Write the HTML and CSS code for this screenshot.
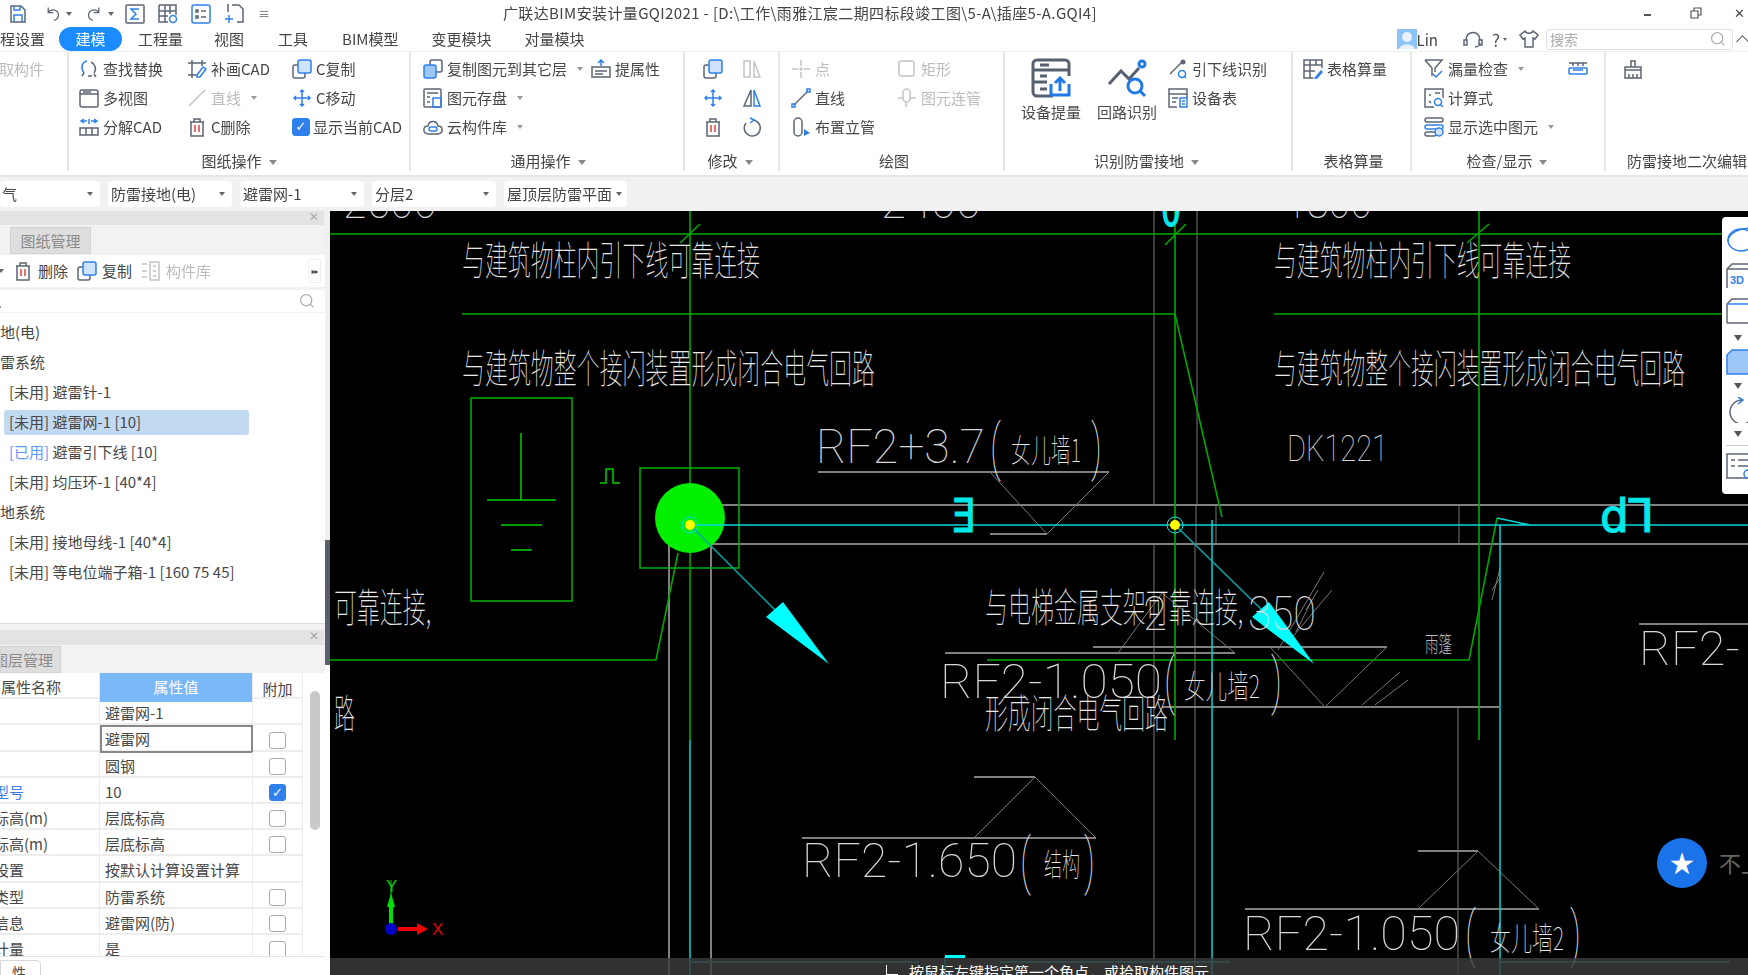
FILE: index.html
```html
<!DOCTYPE html>
<html lang="zh-CN">
<head>
<meta charset="utf-8">
<title>广联达BIM安装计量GQI2021</title>
<link rel="stylesheet" href="styles.css">
</head>
<body>
<svg class="defs" width="0" height="0" aria-hidden="true">
  <symbol id="i-save" viewBox="0 0 20 20"><path class="sg" d="M3 2h10l4 4v12H3z"/><path class="sb" d="M6 18v-7h8v7M6 2v4h6V2"/></symbol>
  <symbol id="i-undo" viewBox="0 0 20 20"><path class="sg" d="M5 3v6h6M5 9c3-5 12-4 12 3 0 3-2 5-5 6"/></symbol>
  <symbol id="i-redo" viewBox="0 0 20 20"><path class="sg" d="M15 3v6H9M15 9C12 4 3 5 3 12c0 3 2 5 5 6"/></symbol>
  <symbol id="i-sigma" viewBox="0 0 20 20"><rect class="sg" x="1" y="1" width="18" height="18" rx="1"/><path class="sb" d="M14 5H6l5 5-5 5h8"/></symbol>
  <symbol id="i-gridview" viewBox="0 0 20 20"><path class="sg" d="M1 1h17v10M1 1v17h9M1 7h17M1 12h9M7 1v17M12 1v9"/><circle class="sb" cx="15" cy="15" r="3.5"/></symbol>
  <symbol id="i-form" viewBox="0 0 20 20"><rect class="sb" x="1" y="1" width="18" height="18" rx="2"/><path class="sg" d="M5 6h2v2H5zM5 12h2v2H5zM10 7h5M10 13h5"/></symbol>
  <symbol id="i-addsel" viewBox="0 0 20 20"><path class="sg" d="M8 1h7l4 4v13h-6M4 8V1h1M19 10v2"/><path class="sb" d="M5 11v8M1 15h8"/></symbol>
  <symbol id="i-find" viewBox="0 0 20 20"><path class="sb" d="M8 2C3 3 1 9 5 14"/><path class="sg" d="M12 3c4 2 6 7 3 11M9 17h4M15 15l2 3M5 14l-2 3"/></symbol>
  <symbol id="i-cadadd" viewBox="0 0 20 20"><path class="sg" d="M1 4h18M1 16h9M5 1v18M15 1v6"/><path class="sb" d="M10 16l6-8 3 2-6 8h-3z"/></symbol>
  <symbol id="i-copy" viewBox="0 0 20 20"><rect class="sg" x="1" y="6" width="12" height="13" rx="2"/><rect class="fb" x="6" y="1" width="13" height="13" rx="2"/></symbol>
  <symbol id="i-win" viewBox="0 0 20 20"><rect class="sg" x="1" y="2" width="18" height="17" rx="2"/><path class="sg" d="M1 6h18M4 4h8"/></symbol>
  <symbol id="i-line" viewBox="0 0 20 20"><path class="sd" d="M2 18L18 2"/></symbol>
  <symbol id="i-move" viewBox="0 0 20 20"><path class="sb" d="M10 3v14M3 10h14M8 4l2-2 2 2M8 16l2 2 2-2M4 8l-2 2 2 2M16 8l2 2-2 2"/></symbol>
  <symbol id="i-explode" viewBox="0 0 20 20"><path class="sb" d="M2 4h6M5 2L2 4l3 2M18 4h-6M15 2l3 2-3 2M10 2v5"/><path class="sg" d="M1 11h18v7H1zM7 11v7M13 11v7"/></symbol>
  <symbol id="i-trash" viewBox="0 0 20 20"><path class="sg" d="M3 5h14M7 5V2h6v3M4 5v14h12V5"/><path class="sr" d="M8 8v7M12 8v7"/></symbol>
  <symbol id="i-copyl" viewBox="0 0 20 20"><rect class="sg" x="7" y="1" width="12" height="12" rx="2"/><rect class="fbl" x="1" y="6" width="12" height="13" rx="2"/></symbol>
  <symbol id="i-store" viewBox="0 0 20 20"><rect class="sg" x="1" y="1" width="17" height="18" rx="1"/><path class="sg" d="M4 5h11M4 9h3M4 14h3"/><rect class="sb" x="10" y="10" width="8" height="9"/></symbol>
  <symbol id="i-cloud" viewBox="0 0 20 20"><path class="sg" d="M5 17C-1 16 0 9 5 9c1-6 9-6 10 0 5 0 6 7 0 8z"/><rect class="sb" x="6" y="10" width="8" height="4" rx="2"/></symbol>
  <symbol id="i-prop" viewBox="0 0 20 20"><path class="sg" d="M1 8h18v10H1zM4 12h12M4 15h8"/><path class="sb" d="M10 7V1M7 4l3-3 3 3"/></symbol>
  <symbol id="i-mirrorg" viewBox="0 0 20 20"><path class="sd" d="M2 2h6v16H2zM12 2l6 16h-6z"/></symbol>
  <symbol id="i-mirror" viewBox="0 0 20 20"><path class="sg" d="M9 2L2 18h7z"/><path class="sb" d="M12 2l6 16h-6z"/></symbol>
  <symbol id="i-rot" viewBox="0 0 20 20"><path class="sg" d="M11 3a8 8 0 1 1-7 3"/><path class="sb" d="M8 1l4 2-4 3"/></symbol>
  <symbol id="i-point" viewBox="0 0 20 20"><path class="sd" d="M10 1v6M10 13v6M1 10h6M13 10h6"/><circle class="sd" cx="10" cy="10" r="1"/></symbol>
  <symbol id="i-rect" viewBox="0 0 20 20"><rect class="sd" x="2" y="2" width="15" height="15" rx="2"/></symbol>
  <symbol id="i-lineb" viewBox="0 0 20 20"><path class="sg" d="M3 17L17 3"/><rect class="sb" x="1" y="16" width="3" height="3"/><rect class="sb" x="16" y="1" width="3" height="3"/></symbol>
  <symbol id="i-pipeg" viewBox="0 0 20 20"><rect class="sd" x="6" y="1" width="7" height="13" rx="3.5"/><path class="sd" d="M1 10h5M13 10h6M9 14v5"/></symbol>
  <symbol id="i-pipe" viewBox="0 0 20 20"><rect class="sg" x="3" y="1" width="8" height="18" rx="4"/><path class="tb" d="M13 12l6 4-6 3z"/></symbol>
  <symbol id="i-extract" viewBox="0 0 40 40"><path class="sg2" d="M22 38H6a4 4 0 0 1-4-4V6a4 4 0 0 1 4-4h28a4 4 0 0 1 4 4v12M2 12h36M2 24h14M9 7h9M9 18h7M9 31h7"/><path class="sb2" d="M20 26v11h18V26M29 33V20M24 25l5-5 5 5"/></symbol>
  <symbol id="i-loop" viewBox="0 0 40 40"><path class="sg2" d="M2 26l12-13 8 8 10-11"/><circle class="sb2" cx="35" cy="6" r="3"/><circle class="sb2" cx="28" cy="28" r="7"/><path class="sb2" d="M33 33l5 5"/></symbol>
  <symbol id="i-down" viewBox="0 0 20 20"><path class="sg" d="M2 15L14 3"/><circle class="fg" cx="15" cy="3" r="2.5"/><circle class="sb" cx="14" cy="15" r="3.5"/><path class="sb" d="M16 17l2 2"/></symbol>
  <symbol id="i-devtab" viewBox="0 0 20 20"><path class="sg" d="M9 19H1V1h18v9M1 6h18M4 10h6M4 14h4"/><rect class="sb" x="12" y="10" width="7" height="9"/><path class="sb" d="M14 13h3M14 16h3"/></symbol>
  <symbol id="i-tablec" viewBox="0 0 20 20"><path class="sg" d="M10 19H1V1h18v8M1 6h18M1 12h11M7 1v18M13 1v5"/><path class="sb" d="M13 18l5-6 1 1-5 6h-2z"/></symbol>
  <symbol id="i-filter" viewBox="0 0 20 20"><path class="sg" d="M1 1h17l-7 8v4M1 1l7 8v8"/><path class="sb" d="M9 15l3 3 6-6"/></symbol>
  <symbol id="i-ruler" viewBox="0 0 20 20"><path class="sb" d="M1 9h18M1 15h18M1 9v6M19 9v6M5 11h10"/><path class="sg" d="M1 4h18M5 4v3M10 4v3M15 4v3"/></symbol>
  <symbol id="i-calc" viewBox="0 0 20 20"><path class="sg" d="M10 19H1V1h18v9M5 7h2M5 13l2 2M11 5h5"/><circle class="sb" cx="14" cy="14" r="3.5"/><path class="sb" d="M16 16l3 3"/></symbol>
  <symbol id="i-showsel" viewBox="0 0 20 20"><rect class="sg" x="1" y="1" width="18" height="4" rx="2"/><rect class="sb" x="1" y="8" width="18" height="4" rx="2"/><rect class="sg" x="1" y="15" width="11" height="4" rx="2"/><circle class="fb" cx="15" cy="15" r="4"/></symbol>
  <symbol id="i-brush" viewBox="0 0 20 20"><path class="sg" d="M8 8V2h4v6M2 8h16v3H2zM2 11v8h16v-8M6 15v4M10 15v4M14 15v4"/></symbol>
  <symbol id="i-search" viewBox="0 0 20 20"><circle class="sl" cx="9" cy="9" r="7"/><path class="sl" d="M14 14l4 4"/></symbol>
  <symbol id="i-head" viewBox="0 0 20 20"><path class="sg" d="M3 11C3 1 17 1 17 11M12 18c3 0 5-2 5-4M1 11h3v5H1zM16 11h3v5h-3z"/></symbol>
  <symbol id="i-shirt" viewBox="0 0 20 20"><path class="sg" d="M6 2L1 6l3 4 2-1v9h8V9l2 1 3-4-5-4c-1 3-7 3-8 0z"/></symbol>
  <symbol id="i-lib" viewBox="0 0 20 20"><path class="sd" d="M1 3h5M1 10h5M1 16h5M9 1h9v18H9zM12 5h3M12 10h3M12 15h3"/></symbol>
  <symbol id="i-restore" viewBox="0 0 12 12"><path class="sw" d="M1 4h7v7H1zM4 4V1h7v7H8"/></symbol>
</svg>

<div class="app">
  <header class="title">
    <div class="qat">
      <svg class="ic"><use href="#i-save"/></svg>
      <svg class="ic ic-u"><use href="#i-undo"/></svg><span class="dd"></span>
      <svg class="ic ic-u"><use href="#i-redo"/></svg><span class="dd"></span>
      <svg class="ic"><use href="#i-sigma"/></svg>
      <svg class="ic"><use href="#i-gridview"/></svg>
      <svg class="ic"><use href="#i-form"/></svg>
      <svg class="ic"><use href="#i-addsel"/></svg>
      <span class="more">≡</span>
    </div>
    <div class="title-text">广联达BIM安装计量GQI2021 - [D:\工作\雨雅江宸二期四标段竣工图\5-A\插座5-A.GQI4]</div>
    <div class="winctl"><span class="w-min"></span><svg class="w-max"><use href="#i-restore"/></svg><span class="w-x">✕</span></div>
  </header>

  <nav class="tabs">
    <span class="tab t0">程设置</span>
    <span class="tab on">建模</span>
    <span class="tab t2">工程量</span>
    <span class="tab t3">视图</span>
    <span class="tab t4">工具</span>
    <span class="tab t5">BIM模型</span>
    <span class="tab t6">变更模块</span>
    <span class="tab t7">对量模块</span>
    <div class="user">
      <svg class="avatar" viewBox="0 0 20 20"><rect class="av-bg" width="20" height="20"/><circle class="av-f" cx="10" cy="8" r="5"/><path class="av-f" d="M2 20c1-6 15-6 16 0z"/></svg>
      <span class="lin">Lin</span>
      <svg class="ic ic-h"><use href="#i-head"/></svg>
      <span class="help">?</span><span class="dd dd-s"></span>
      <svg class="ic ic-s"><use href="#i-shirt"/></svg>
      <div class="searchbox"><span>搜索</span><svg class="ic-sm"><use href="#i-search"/></svg></div>
      <span class="collapse"></span>
    </div>
  </nav>

  <section class="ribbon">
    <div class="grp g1">
      <div class="grp-body"><div class="col"><div class="it off cut">取构件</div></div></div>
    </div>
    <div class="grp g2">
      <div class="grp-body">
        <div class="col c2a">
          <div class="it"><svg class="ic"><use href="#i-find"/></svg>查找替换</div>
          <div class="it"><svg class="ic"><use href="#i-win"/></svg>多视图</div>
          <div class="it"><svg class="ic"><use href="#i-explode"/></svg>分解CAD</div>
        </div>
        <div class="col c2b">
          <div class="it"><svg class="ic"><use href="#i-cadadd"/></svg>补画CAD</div>
          <div class="it off"><svg class="ic"><use href="#i-line"/></svg>直线<span class="dd dd-g"></span></div>
          <div class="it"><svg class="ic"><use href="#i-trash"/></svg>C删除</div>
        </div>
        <div class="col">
          <div class="it"><svg class="ic"><use href="#i-copy"/></svg>C复制</div>
          <div class="it"><svg class="ic"><use href="#i-move"/></svg>C移动</div>
          <div class="it it-chk"><span class="cb on big">✓</span>显示当前CAD</div>
        </div>
      </div>
      <div class="grp-label">图纸操作<span class="dd dd-l"></span></div>
    </div>
    <div class="grp g3">
      <div class="grp-body">
        <div class="col c3a">
          <div class="it"><svg class="ic"><use href="#i-copyl"/></svg>复制图元到其它层<span class="dd dd-g"></span></div>
          <div class="it"><svg class="ic"><use href="#i-store"/></svg>图元存盘<span class="dd dd-g"></span></div>
          <div class="it"><svg class="ic"><use href="#i-cloud"/></svg>云构件库<span class="dd dd-g"></span></div>
        </div>
        <div class="col"><div class="it"><svg class="ic"><use href="#i-prop"/></svg>提属性</div></div>
      </div>
      <div class="grp-label">通用操作<span class="dd dd-l"></span></div>
    </div>
    <div class="grp g4">
      <div class="grp-body">
        <div class="col c4a">
          <div class="it"><svg class="ic"><use href="#i-copy"/></svg></div>
          <div class="it"><svg class="ic"><use href="#i-move"/></svg></div>
          <div class="it"><svg class="ic"><use href="#i-trash"/></svg></div>
        </div>
        <div class="col">
          <div class="it"><svg class="ic"><use href="#i-mirrorg"/></svg></div>
          <div class="it"><svg class="ic"><use href="#i-mirror"/></svg></div>
          <div class="it"><svg class="ic"><use href="#i-rot"/></svg></div>
        </div>
      </div>
      <div class="grp-label">修改<span class="dd dd-l"></span></div>
    </div>
    <div class="grp g5">
      <div class="grp-body">
        <div class="col c5a">
          <div class="it off"><svg class="ic"><use href="#i-point"/></svg>点</div>
          <div class="it"><svg class="ic"><use href="#i-lineb"/></svg>直线</div>
          <div class="it"><svg class="ic"><use href="#i-pipe"/></svg>布置立管</div>
        </div>
        <div class="col">
          <div class="it off"><svg class="ic"><use href="#i-rect"/></svg>矩形</div>
          <div class="it off"><svg class="ic"><use href="#i-pipeg"/></svg>图元连管</div>
        </div>
      </div>
      <div class="grp-label">绘图</div>
    </div>
    <div class="grp g6">
      <div class="grp-body">
        <div class="large"><svg class="ic-lg"><use href="#i-extract"/></svg>设备提量</div>
        <div class="large"><svg class="ic-lg"><use href="#i-loop"/></svg>回路识别</div>
        <div class="col c6c">
          <div class="it"><svg class="ic"><use href="#i-down"/></svg>引下线识别</div>
          <div class="it"><svg class="ic"><use href="#i-devtab"/></svg>设备表</div>
        </div>
      </div>
      <div class="grp-label">识别防雷接地<span class="dd dd-l"></span></div>
    </div>
    <div class="grp g7">
      <div class="grp-body"><div class="col"><div class="it"><svg class="ic"><use href="#i-tablec"/></svg>表格算量</div></div></div>
      <div class="grp-label">表格算量</div>
    </div>
    <div class="grp g8">
      <div class="grp-body">
        <div class="col c8a">
          <div class="it"><svg class="ic"><use href="#i-filter"/></svg>漏量检查<span class="dd dd-g"></span></div>
          <div class="it"><svg class="ic"><use href="#i-calc"/></svg>计算式</div>
          <div class="it"><svg class="ic"><use href="#i-showsel"/></svg>显示选中图元<span class="dd dd-g"></span></div>
        </div>
        <div class="col"><div class="it"><svg class="ic"><use href="#i-ruler"/></svg></div></div>
      </div>
      <div class="grp-label">检查/显示<span class="dd dd-l"></span></div>
    </div>
    <div class="grp g9">
      <div class="grp-body"><div class="col"><div class="it"><svg class="ic"><use href="#i-brush"/></svg></div></div></div>
      <div class="grp-label lab-nw">防雷接地二次编辑</div>
    </div>
  </section>

  <section class="bar">
    <div class="sel s1"><span class="cut">气</span><span class="dd"></span></div>
    <div class="sel s2"><span>防雷接地(电)</span><span class="dd"></span></div>
    <div class="sel s2"><span>避雷网-1</span><span class="dd"></span></div>
    <div class="sel s2"><span>分层2</span><span class="dd"></span></div>
    <div class="sel s3"><span>屋顶层防雷平面</span><span class="dd"></span></div>
  </section>

  <main class="main">
    <aside class="side">
      <div class="strip"><span class="x">✕</span></div>
      <div class="ptabs p1"><span class="ptab">图纸管理</span></div>
      <div class="ptools">
        <span class="dd dd-first"></span>
        <span class="pt"><svg class="ic"><use href="#i-trash"/></svg>删除</span>
        <span class="pt"><svg class="ic"><use href="#i-copy"/></svg>复制</span>
        <span class="pt off"><svg class="ic"><use href="#i-lib"/></svg>构件库</span>
        <span class="pmore">▸▸</span>
      </div>
      <div class="psearch"><span class="dot">.</span><svg class="ic-sm"><use href="#i-search"/></svg></div>
      <ul class="tree">
        <li>地(电)</li>
        <li>雷系统</li>
        <li class="lv2">[未用] 避雷针-1</li>
        <li class="lv2 sel-row"><span>[未用] 避雷网-1 [10]</span></li>
        <li class="lv2"><span class="used">[已用]</span> 避雷引下线 [10]</li>
        <li class="lv2">[未用] 均压环-1 [40*4]</li>
        <li>地系统</li>
        <li class="lv2">[未用] 接地母线-1 [40*4]</li>
        <li class="lv2">[未用] 等电位端子箱-1 [160 75 45]</li>
      </ul>
      <div class="pgap"></div>
      <div class="strip s2x"><span class="x">✕</span></div>
      <div class="ptabs p2"><span class="ptab pt2">图层管理</span></div>
      <div class="ptable">
        <div class="grid">
          <div class="r hdr"><div class="c1">属性名称</div><div class="c2">属性值</div><div class="c3">附加</div></div>
          <div class="r"><div class="c1"></div><div class="c2">避雷网-1</div><div class="c3"></div></div>
          <div class="r"><div class="c1"></div><div class="c2 edit">避雷网</div><div class="c3"><span class="cb"></span></div></div>
          <div class="r"><div class="c1"></div><div class="c2">圆钢</div><div class="c3"><span class="cb"></span></div></div>
          <div class="r"><div class="c1 link">型号</div><div class="c2">10</div><div class="c3"><span class="cb on">✓</span></div></div>
          <div class="r"><div class="c1">标高(m)</div><div class="c2">层底标高</div><div class="c3"><span class="cb"></span></div></div>
          <div class="r"><div class="c1">标高(m)</div><div class="c2">层底标高</div><div class="c3"><span class="cb"></span></div></div>
          <div class="r"><div class="c1">设置</div><div class="c2">按默认计算设置计算</div><div class="c3"></div></div>
          <div class="r"><div class="c1">类型</div><div class="c2">防雷系统</div><div class="c3"><span class="cb"></span></div></div>
          <div class="r"><div class="c1">信息</div><div class="c2">避雷网(防)</div><div class="c3"><span class="cb"></span></div></div>
          <div class="r last"><div class="c1">计量</div><div class="c2">是</div><div class="c3"><span class="cb"></span></div></div>
        </div>
        <div class="vscroll"><span></span></div>
      </div>
      <div class="pfoot"><span class="ftab">性</span></div>
    </aside>
    <div class="gutter"><span></span></div>
    <div class="canvas">
      <svg class="cad" viewBox="330 211 1418 764" width="1418" height="764">
        <!-- grey walls -->
        <path class="w" d="M1154 211V505M1197 211V505M1154 544V975M1195 544V975M1458 707V975M1196 505V544M1216 505V544M1459 505V544"/>
        <path class="w2" d="M669 975V505H1748M711 975V544H1748"/>
        <!-- CAD annotation lines -->
        <path class="w2" d="M818 472H1109M945 653H1235M1093 647H1387M802 838H1096M1245 909H1539M1639 624H1748M974 777H1035M1418 851H1478M1162 707H1499M990 534H1047M1266 707H1325"/>
        <path class="w" d="M990 472L1047 534L1109 472M1118 653L1162 593L1235 653M1270 647L1325 707L1387 647M974 838L1035 777L1096 838M1418 909L1478 851L1539 909"/>
        <path class="w" d="M1278 650L1324 572M1290 640L1332 590M1296 632L1312 600M1306 610L1318 590M1362 705L1400 672M1375 705L1408 680M1492 600L1500 568M1492 590L1500 578"/>
        <!-- green -->
        <path class="g" d="M330 234H1722M462 314H1175L1222 517M1274 314H1722M330 660H656L678 553M987 660H1469L1497 518"/>
        <path class="g" d="M690 211V740M1175 211V740M1479 211V740M680 243L700 224M1165 245L1186 224M1467 243L1489 224"/>
        <rect class="g" x="471" y="398" width="101" height="203"/>
        <rect class="g" x="640" y="468" width="99" height="100"/>
        <path class="gb" d="M521 433V500M487 500H556M501 525H542M511 550H532M600 483H606V469H613V483H620"/>
        <circle class="disc" cx="690" cy="518" r="35"/>
        <!-- cyan -->
        <path class="cy" d="M690 525H1748M690 740V975M1212 520V975M1500 525V975M1497 518L1530 525"/>
        <path class="cyd" d="M690 525L775 610M1175 525L1262 610M689 962H919M1000 962H1230M1499 962H1730M945 975V957"/>
        <polygon class="cf" points="829,664 783,602 766,617"/>
        <polygon class="cf" points="1314,664 1269,602 1252,617"/>
        <rect class="cf" x="945" y="955" width="20" height="3"/>
        <circle class="ring" cx="690" cy="525" r="8"/><circle class="dot-y" cx="690" cy="525" r="5"/>
        <circle class="ring" cx="1175" cy="525" r="8"/><circle class="dot-y" cx="1175" cy="525" r="5"/>
        <text class="cyt" x="952" y="532" textLength="24" lengthAdjust="spacingAndGlyphs">Ǝ</text>
        <text class="cyt" x="1600" y="532" textLength="54" lengthAdjust="spacingAndGlyphs">d⅂</text>
        <text class="cyt" x="1161" y="226" textLength="20" lengthAdjust="spacingAndGlyphs">0</text>
        <!-- clipped dimension labels -->
        <text class="la" x="343" y="218" textLength="94" lengthAdjust="spacingAndGlyphs">2500</text>
        <text class="la" x="881" y="218" textLength="100" lengthAdjust="spacingAndGlyphs">2400</text>
        <text class="la" x="1285" y="218" textLength="87" lengthAdjust="spacingAndGlyphs">1800</text>
        <!-- Chinese notes -->
        <text class="cn" x="462" y="275" textLength="298" lengthAdjust="spacingAndGlyphs">与建筑物柱内引下线可靠连接</text>
        <text class="cn" x="1274" y="275" textLength="297" lengthAdjust="spacingAndGlyphs">与建筑物柱内引下线可靠连接</text>
        <text class="cn" x="462" y="383" textLength="413" lengthAdjust="spacingAndGlyphs">与建筑物整个接闪装置形成闭合电气回路</text>
        <text class="cn" x="1274" y="383" textLength="411" lengthAdjust="spacingAndGlyphs">与建筑物整个接闪装置形成闭合电气回路</text>
        <text class="cn" x="334" y="622" textLength="97" lengthAdjust="spacingAndGlyphs">可靠连接,</text>
        <text class="cn" x="334" y="728" textLength="21" lengthAdjust="spacingAndGlyphs">路</text>
        <text class="cn" x="985" y="622" textLength="258" lengthAdjust="spacingAndGlyphs">与电梯金属支架可靠连接,</text>
        <text class="cn" x="985" y="728" textLength="183" lengthAdjust="spacingAndGlyphs">形成闭合电气回路</text>
        <text class="cn-s" x="1425" y="652" textLength="27" lengthAdjust="spacingAndGlyphs">雨篷</text>
        <!-- elevation labels -->
        <text class="la" x="816" y="463" textLength="169" lengthAdjust="spacingAndGlyphs">RF2+3.7</text>
        <text class="par" x="990" y="468" textLength="11" lengthAdjust="spacingAndGlyphs">(</text>
        <text class="cn-m" x="1011" y="462" textLength="70" lengthAdjust="spacingAndGlyphs">女儿墙1</text>
        <text class="par" x="1091" y="468" textLength="11" lengthAdjust="spacingAndGlyphs">)</text>
        <text class="la-s" x="1287" y="461" textLength="101" lengthAdjust="spacingAndGlyphs">DK1221</text>
        <text class="la" x="1143" y="630" textLength="24" lengthAdjust="spacingAndGlyphs">2</text>
        <text class="la" x="1248" y="630" textLength="68" lengthAdjust="spacingAndGlyphs">350</text>
        <text class="la" x="940" y="698" textLength="222" lengthAdjust="spacingAndGlyphs">RF2-1.050</text>
        <text class="par" x="1164" y="702" textLength="11" lengthAdjust="spacingAndGlyphs">(</text>
        <text class="cn-m" x="1184" y="698" textLength="76" lengthAdjust="spacingAndGlyphs">女儿墙2</text>
        <text class="par" x="1271" y="702" textLength="11" lengthAdjust="spacingAndGlyphs">)</text>
        <text class="la" x="1639" y="665" textLength="101" lengthAdjust="spacingAndGlyphs">RF2-</text>
        <text class="la" x="802" y="877" textLength="215" lengthAdjust="spacingAndGlyphs">RF2-1.650</text>
        <text class="par" x="1020" y="882" textLength="11" lengthAdjust="spacingAndGlyphs">(</text>
        <text class="cn-m" x="1044" y="876" textLength="36" lengthAdjust="spacingAndGlyphs">结构</text>
        <text class="par" x="1084" y="882" textLength="11" lengthAdjust="spacingAndGlyphs">)</text>
        <text class="la" x="1243" y="950" textLength="217" lengthAdjust="spacingAndGlyphs">RF2-1.050</text>
        <text class="par" x="1465" y="955" textLength="11" lengthAdjust="spacingAndGlyphs">(</text>
        <text class="cn-m" x="1490" y="950" textLength="74" lengthAdjust="spacingAndGlyphs">女儿墙2</text>
        <text class="par" x="1570" y="955" textLength="11" lengthAdjust="spacingAndGlyphs">)</text>
        <!-- axis -->
        <path class="ax-g" d="M391 923V880"/>
        <polygon class="ax-gf" points="391,893 395,907 387,907"/>
        <rect class="ax-gf" x="389" y="905" width="4" height="20"/>
        <path class="ax-rf" d="M398 927H417V923L428 929L417 935V931H398Z"/>
        <circle class="ax-b" cx="391" cy="929" r="6"/>
        <text class="ax-ty" x="386" y="892">Y</text>
        <text class="ax-tx" x="432" y="935">X</text>
      </svg>

      <div class="rtools">
        <svg class="rt" viewBox="0 0 30 26"><path class="sb" d="M2 15C2 5 14 1 28 1"/><ellipse class="sb" cx="15" cy="13" rx="13" ry="11"/></svg>
        <svg class="rt rt-3d" viewBox="0 0 30 26"><path class="sg" d="M1 25V6l5-5h24M1 6h29"/><text class="t3d" x="4" y="21">3D</text></svg>
        <svg class="rt rt-c" viewBox="0 0 30 26"><path class="sg" d="M1 25V6l5-5h24M30 25H1"/><path class="sb" d="M1 6h29"/></svg>
        <span class="rd"></span>
        <svg class="rt" viewBox="0 0 30 26"><path class="fbl" d="M1 25V6l5-5h24v24z"/></svg>
        <span class="rd"></span>
        <svg class="rt" viewBox="0 0 30 26"><path class="sg" d="M16 3a12 12 0 1 0 12 12"/><path class="sb" d="M12 0l5 3-5 4"/></svg>
        <span class="rd"></span>
        <span class="rsep"></span>
        <svg class="rt" viewBox="0 0 30 26"><path class="sg" d="M30 1H1v24h29M5 7h4M12 7h12M5 13h4M12 13h12"/><circle class="sb" cx="22" cy="21" r="4"/></svg>
      </div>

      <div class="fab"><span>★</span></div>
      <span class="fab-note">不上</span>

      <div class="status">
        <span class="st-cur"></span>
        <span class="st-text">按鼠标左键指定第一个角点，或拾取构件图元</span>
      </div>
    </div>
  </main>
</div>
</body>
</html>
```

FILE: styles.css
```css
* { box-sizing: border-box; }
html, body { margin: 0; padding: 0; }
body {
  width: 1748px;
  height: 975px;
  overflow: hidden;
  background: #fff;
  font-family: "Noto Sans CJK SC", "Noto Sans", sans-serif;
  font-size: 15px;
  color: #4a4a4a;
}
.defs { position: absolute; }
.app { display: flex; flex-direction: column; width: 1748px; height: 975px; filter: blur(.35px); }

/* icon strokes */
.sg, .sb, .sr, .sd, .sl, .sg2, .sb2, .sw { fill: none; stroke-width: 1.5; }
.sg { stroke: #5c6674; }
.sb { stroke: #2f80ed; }
.sr { stroke: #e0413a; }
.sd { stroke: #c4c4c4; }
.sl { stroke: #aaa; }
.sw { stroke: #555; stroke-width: 1.2; }
.sg2 { stroke: #56606e; stroke-width: 3; }
.sb2 { stroke: #1f7ae8; stroke-width: 3; }
.fb { fill: #cfe3fb; stroke: #2f80ed; stroke-width: 1.5; }
.fbl { fill: #9cc7f6; stroke: #2f80ed; stroke-width: 1.5; }
.fg { fill: #5c6674; }
.tb { fill: #2f80ed; }
.ic { width: 20px; height: 20px; flex: none; }
.ic-lg { width: 40px; height: 40px; display: block; }
.ic-sm { width: 16px; height: 16px; flex: none; }

/* dropdown caret */
.dd {
  display: inline-block;
  flex: none;
  width: 0;
  height: 0;
  border-left: 3.5px solid transparent;
  border-right: 3.5px solid transparent;
  border-top: 4px solid #666;
}
.dd-g { margin-left: 6px; border-top-color: #999; }
.dd-l { margin-left: 7px; border-left-width: 4.5px; border-right-width: 4.5px; border-top: 5px solid #888; vertical-align: middle; }

/* title bar */
.title { position: relative; display: flex; height: 27px; flex: none; align-items: center; }
.qat { display: flex; align-items: center; padding-left: 8px; }
.qat .ic { margin-right: 13px; }
.qat .ic-u { width: 17px; height: 17px; margin-left: 3px; margin-right: 5px; }
.qat .dd { margin-right: 11px; }
.more { font-size: 12px; color: #666; margin-left: 1px; }
.title-text {
  position: absolute;
  left: 503px;
  top: 2px;
  width: 620px;
  white-space: nowrap;
  font-size: 15px;
  line-height: 22px;
  letter-spacing: .37px;
  color: #444;
}
.winctl { margin-left: auto; display: flex; align-items: center; height: 24px; }
.w-min { width: 7px; height: 2px; background: #555; margin-right: 39px; margin-top: 3px; }
.w-max { width: 12px; height: 12px; margin-right: 32px; margin-top: -2px; }
.w-x { font-size: 13px; color: #444; margin-right: 3px; font-family: "DejaVu Sans", sans-serif; }

/* tabs */
.tabs { display: flex; height: 25px; flex: none; align-items: center; border-bottom: 1px solid #eee; }
.tab { white-space: nowrap; line-height: 24px; color: #444; }
.t0 { width: 59px; }
.tab.on { width: 63px; height: 24px; border-radius: 12px; background: #1a8cff; color: #fff; text-align: center; }
.t2 { margin-left: 16px; }
.t3 { margin-left: 31px; }
.t4 { margin-left: 34px; }
.t5 { margin-left: 34px; }
.t6 { margin-left: 33px; }
.t7 { margin-left: 33px; }
.user { margin-left: auto; display: flex; align-items: center; height: 24px; }
.avatar { width: 20px; height: 20px; }
.av-bg { fill: #8cc4f7; }
.av-f { fill: #e8f2fc; }
.lin { margin-right: 25px; color: #444; }
.user .ic-h { margin-right: 9px; }
.help { font-size: 17px; margin-right: 3px; color: #555; }
.dd-s { margin-right: 12px; border-left-width: 2.5px; border-right-width: 2.5px; border-top-width: 3px; }
.user .ic-s { margin-right: 7px; }
.searchbox {
  width: 187px;
  height: 21px;
  border: 1px solid #e2e2e2;
  border-radius: 3px;
  display: flex;
  align-items: center;
  justify-content: space-between;
  padding: 0 6px 0 3px;
  font-size: 14px;
  color: #aaa;
}
.collapse {
  width: 9px;
  height: 9px;
  margin: 4px 1px 0 5px;
  border-left: 1.5px solid #555;
  border-top: 1.5px solid #555;
  transform: rotate(45deg);
}

/* ribbon */
.ribbon { display: flex; height: 125px; flex: none; padding-bottom: 4px; border-bottom: 2px solid #e6e6e6; }
.grp { display: flex; flex-direction: column; padding-top: 2px; border-right: 2px solid #e6e6e6; flex: none; }
.grp-body { display: flex; flex: 1; }
.grp-label { height: 22px; text-align: center; line-height: 24px; white-space: nowrap; color: #444; }
.lab-nw { text-align: left; }
.col { display: flex; flex-direction: column; }
.it { display: flex; align-items: center; gap: 4px; height: 29px; white-space: nowrap; color: #484848; }
.it.off { color: #bcbcbc; }
.cut { margin-left: -1px; }
.it-chk { gap: 3px; }
.g1 { width: 69px; }
.g2 { width: 342px; padding-left: 10px; }
.g3 { width: 274px; padding-left: 12px; }
.g4 { width: 95px; padding-left: 18px; }
.g5 { width: 225px; padding-left: 11px; }
.g6 { width: 288px; padding-left: 16px; }
.g7 { width: 119px; padding-left: 10px; }
.g8 { width: 194px; padding-left: 12px; }
.g9 { width: 142px; padding-left: 17px; border-right: 0; }
.g2 .grp-label, .g3 .grp-label { margin-left: -10px; }
.g4 .grp-label { margin-left: -21px; }
.g5 .grp-label { margin-left: -6px; }
.g6 .grp-label { margin-left: -19px; }
.g7 .grp-label { margin-left: -6px; }
.g8 .grp-label { margin-left: -14px; }
.g9 .grp-label { margin-left: -17px; padding-left: 21px; }
.c2a { width: 108px; }
.c2b { width: 105px; }
.c3a { width: 168px; }
.c4a { width: 39px; }
.c5a { width: 106px; }
.c8a { width: 144px; }
.large { width: 60px; margin-right: 16px; display: flex; flex-direction: column; align-items: center; gap: 3px; padding-top: 4px; white-space: nowrap; }
.large + .large { margin-right: 11px; }

/* selector bar */
.bar { display: flex; height: 34px; flex: none; align-items: center; gap: 8px; background: #f1f1f1; }
.sel {
  height: 26px;
  background: #fff;
  border-radius: 4px;
  display: flex;
  align-items: center;
  justify-content: space-between;
  padding: 0 7px 0 3px;
  line-height: 24px;
  white-space: nowrap;
  color: #444;
}
.s1 { width: 100px; }
.s2 { width: 124px; }
.s3 { width: 123px; overflow: hidden; padding-right: 5px; }

/* main */
.main { display: flex; flex: 1; min-height: 0; }
.side { width: 325px; flex: none; display: flex; flex-direction: column; background: #f2f2f2; }
.strip { height: 14px; flex: none; position: relative; background: #e3e3e3; margin-right: 1px; }
.x { position: absolute; right: 5px; top: -3px; font-size: 12px; line-height: 18px; color: #aaa; font-family: "DejaVu Sans", sans-serif; }
.s2x { height: 15px; }
.ptabs { flex: none; display: flex; align-items: flex-end; }
.p1 { height: 29px; padding-left: 10px; }
.p2 { height: 28px; }
.ptab {
  display: block;
  width: 81px;
  height: 27px;
  line-height: 26px;
  text-align: center;
  background: #dedede;
  border: 1px solid #d2d2d2;
  color: #8a8a8a;
  white-space: nowrap;
}
.pt2 { width: 61px; overflow: hidden; text-indent: -15px; }
.ptools {
  height: 32px;
  flex: none;
  margin-top: 1px;
  background: #fff;
  display: flex;
  align-items: center;
  font-size: 15px;
  line-height: 34px;
  color: #444;
}
.dd-first { margin-left: -2px; margin-right: 9px; }
.pt { display: flex; align-items: center; gap: 5px; margin-right: 9px; white-space: nowrap; }
.pt.off { color: #bbb; }
.pmore {
  margin-left: auto;
  margin-right: 4px;
  width: 13px;
  height: 24px;
  font-size: 8px;
  line-height: 24px;
  text-align: center;
  letter-spacing: -1px;
  color: #444;
  background: #fff;
  border: 1px solid #eee;
  border-radius: 3px;
  font-family: "DejaVu Sans", sans-serif;
}
.psearch {
  height: 22px;
  flex: none;
  margin-top: 3px;
  margin-bottom: 1px;
  background: #fff;
  display: flex;
  align-items: center;
  justify-content: space-between;
  padding-right: 10px;
  color: #888;
}
.dot { margin-left: -2px; }
.tree {
  list-style: none;
  margin: 0;
  padding: 4px 0 0;
  height: 310px;
  flex: none;
  background: #fff;
  line-height: 30px;
  color: #484848;
  white-space: nowrap;
}
.tree li { height: 30px; }
.lv2 { padding-left: 9px; }
.sel-row { position: relative; }
.sel-row::before {
  content: "";
  position: absolute;
  left: 4px;
  top: 3px;
  width: 245px;
  height: 25px;
  background: #c2d9f2;
  border-radius: 3px;
}
.sel-row span { position: relative; }
.used { color: #5c9cf5; }
.pgap { height: 7px; flex: none; border-top: 1px solid #ddd; background: #f2f2f2; }

.ptable { height: 283px; flex: none; display: flex; background: #fff; }
.grid { width: 303px; flex: none; overflow: hidden; }
.r {
  display: grid;
  grid-template-columns: 100px 153px 50px;
  height: 26.2px;
  border-bottom: 2px solid #ededed;
  line-height: 27px;
  color: #484848;
}
.c1 { border-right: 1px solid #ededed; white-space: nowrap; text-indent: -6px; overflow: hidden; }
.c2 { padding-left: 5px; white-space: nowrap; border-right: 1px solid #ededed; }
.c3 { display: flex; align-items: center; justify-content: center; padding-top: 2px; border-right: 1px solid #ededed; }
.hdr .c1 { text-indent: 1px; }
.hdr .c2 { background: #7ab8f8; color: #fff; text-align: center; padding: 0; }
.link { color: #3b7be8; }
.edit { border: 2px solid #888; padding-left: 3px; line-height: 24px; }
.cb {
  display: block;
  width: 17px;
  height: 17px;
  border: 1px solid #aaa;
  border-radius: 3px;
  background: #fff;
  font-family: "DejaVu Sans", sans-serif;
}
.cb.on { background: #2f80ed; border-color: #2f80ed; color: #fff; font-size: 13px; line-height: 15px; text-align: center; }
.cb.big { flex: none; width: 18px; height: 18px; }
.vscroll { flex: 1; padding: 18px 0 0 7px; }
.vscroll span { display: block; width: 10px; height: 139px; background: #c9c9c9; border-radius: 5px; }
.pfoot { flex: 1; background: #fff; padding-top: 3px; border-top: 1px solid #e3e3e3; overflow: hidden; }
.ftab {
  display: block;
  width: 41px;
  height: 24px;
  border: 1px solid #d8d8d8;
  border-radius: 0 4px 0 0;
  text-align: right;
  padding-right: 14px;
  line-height: 22px;
  font-size: 14px;
}
.gutter { width: 5px; flex: none; background: #fff; }
.gutter span { display: block; height: 454px; background: linear-gradient(#f0f0f0 329px, #5a6068 329px); }

/* canvas */
.canvas { position: relative; flex: 1; background: #000; overflow: hidden; }
.cad { display: block; }
.w { fill: none; stroke: #777; stroke-width: 1; }
.w2 { fill: none; stroke: #808080; stroke-width: 2; }
.g { fill: none; stroke: #00a800; stroke-width: 1.6; }
.gb { fill: none; stroke: #00d000; stroke-width: 1.5; }
.disc { fill: #00f000; }
.cy { fill: none; stroke: #00d8dc; stroke-width: 1.5; }
.cyd { fill: none; stroke: #00a8ac; stroke-width: 1.5; }
.cf { fill: #00ffff; }
.ring { fill: none; stroke: #00e0e0; stroke-width: 1; }
.dot-y { fill: #ffff00; }
.cyt { fill: #00e8e8; stroke: #00e8e8; stroke-width: 1.2; font-family: "DejaVu Sans", sans-serif; font-size: 46px; }
.la { fill: #d6d6d6; font-family: Roboto, "Noto Sans", sans-serif; font-weight: 100; font-size: 48px; }
.la-s { fill: #d6d6d6; font-family: Roboto, "Noto Sans", sans-serif; font-weight: 100; font-size: 36px; }
.par { fill: #d6d6d6; font-family: Roboto, sans-serif; font-weight: 100; font-size: 62px; }
.cn { fill: #e8e8e8; font-family: "Noto Sans CJK SC", sans-serif; font-weight: 100; font-size: 40px; }
.cn-m { fill: #e8e8e8; font-family: "Noto Sans CJK SC", sans-serif; font-weight: 100; font-size: 32px; }
.cn-s { fill: #bbb; font-family: "Noto Sans CJK SC", sans-serif; font-weight: 300; font-size: 22px; }
.ax-g { stroke: #00d000; stroke-width: 1; }
.ax-gf { fill: #00e000; }
.ax-rf { fill: #ee0000; }
.ax-b { fill: #0000c8; }
.ax-ty { fill: #00d000; font: 300 17px "Liberation Sans", sans-serif; }
.ax-tx { fill: #e00000; font: 300 17px "Liberation Sans", sans-serif; }

.rtools {
  position: absolute;
  right: 0;
  top: 6px;
  width: 26px;
  height: 277px;
  background: #fff;
  border-radius: 4px 0 0 4px;
  overflow: hidden;
  display: flex;
  flex-direction: column;
  align-items: flex-start;
  padding: 10px 0 0 4px;
}
.rt { width: 30px; height: 26px; flex: none; margin-bottom: 10px; }
.rt-3d { margin-bottom: 9px; }
.rt-c { margin-bottom: 13px; }
.t3d { fill: #2f80ed; font: 700 11px "Liberation Sans", sans-serif; }
.rd {
  flex: none;
  width: 0;
  height: 0;
  margin: 0 0 8px 8px;
  border-left: 4px solid transparent;
  border-right: 4px solid transparent;
  border-top: 6px solid #555;
}
.rt + .rd { margin-top: -2px; }
.rsep { flex: none; width: 26px; height: 1px; background: #ccc; margin-bottom: 7px; }
.fab {
  position: absolute;
  left: 1327px;
  top: 627px;
  width: 50px;
  height: 50px;
  border-radius: 50%;
  background: #1a73e8;
  color: #fff;
  display: flex;
  align-items: center;
  justify-content: center;
  font-size: 30px;
  font-family: "DejaVu Sans", sans-serif;
}
.fab-note { position: absolute; left: 1389px; top: 635px; font-size: 22px; color: #666; white-space: nowrap; }
.status {
  position: absolute;
  left: 0;
  right: 0;
  bottom: 0;
  height: 17px;
  background: rgba(60, 60, 60, .82);
  overflow: hidden;
}
.st-text {
  position: absolute;
  left: 579px;
  top: 4px;
  font-size: 15px;
  line-height: 20px;
  color: #fff;
  white-space: nowrap;
}
.st-cur {
  position: absolute;
  left: 556px;
  top: 7px;
  width: 12px;
  height: 10px;
  border-left: 1px solid #fff;
  border-bottom: 1px solid #fff;
}
```
